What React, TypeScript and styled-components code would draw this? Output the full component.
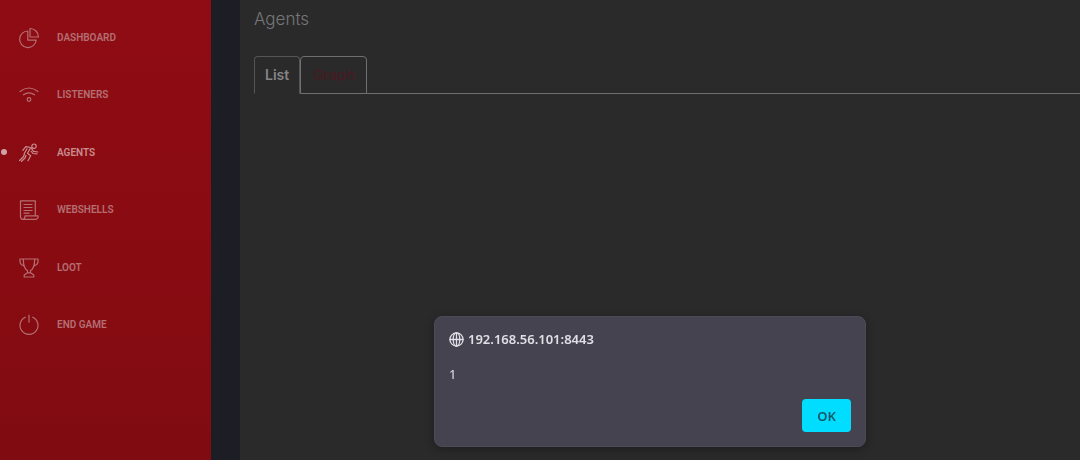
import React from 'react';
import styled, { createGlobalStyle } from 'styled-components';

const GlobalStyle = createGlobalStyle`
  *, *::before, *::after { box-sizing: border-box; }
  html, body, #root { height: 100%; }
  body { margin: 0; background: #2a2a2b; font-family: Inter, "Liberation Sans", sans-serif; overflow: hidden; }
`;

const Shell = styled.div`
  display: flex;
  min-height: 100%;
  background: #1d1d26;
`;

const Sidebar = styled.nav`
  flex: 0 0 211px;
  margin-right: 29px;
  padding-top: 9px;
  background: linear-gradient(180deg, #8f0c14 0%, #8a0b12 50%, #7f0c11 100%);
`;

const Menu = styled.ul`
  display: grid;
  grid-auto-rows: 1fr;
  height: 345px;
  list-style: none;
  margin: 0;
  padding: 0;
`;

const MenuLink = styled.a<{ $active?: boolean }>`
  position: relative;
  display: flex;
  align-items: center;
  gap: 17px;
  height: 100%;
  padding-left: 18px;
  color: ${(p) => (p.$active ? '#c98d8f' : '#b46f72')};
  font: 600 10px/16px Roboto, sans-serif;
  text-decoration: none;
  text-transform: uppercase;

  &::before {
    content: ${(p) => (p.$active ? '""' : 'none')};
    position: absolute;
    left: 1px;
    top: 25px;
    width: 6px;
    height: 6px;
    border-radius: 50%;
    background: #cfa3a3;
  }
`;

const Icon = styled.svg`
  width: 22px;
  height: 22px;
  fill: none;
  stroke: currentColor;
  stroke-width: 1.2;
  stroke-linecap: round;
  stroke-linejoin: round;
`;

const Main = styled.main`
  flex: 1;
  min-width: 0;
  padding: 7px 0 0 14px;
  background: #2a2a2b;
`;

const Title = styled.h1`
  margin: 0 0 25px;
  color: #77777a;
  font-size: 17px;
  line-height: 24px;
  font-weight: 300;
`;

const Tabs = styled.div`
  display: flex;
  align-items: stretch;
  height: 38px;

  &::after {
    content: "";
    flex: 1;
    border-bottom: 1px solid #707072;
  }
`;

const Tab = styled.button<{ $selected?: boolean }>`
  padding: 0 ${(p) => (p.$selected ? 10 : 12)}px;
  border: 1px solid ${(p) => (p.$selected ? '#555557' : '#707072')};
  border-bottom-color: ${(p) => (p.$selected ? 'transparent' : '#707072')};
  border-radius: 4px 4px 0 0;
  background: transparent;
  color: ${(p) => (p.$selected ? '#858587' : '#431d22')};
  font: 600 14px/20px Inter, sans-serif;
`;

const Dialog = styled.section`
  position: fixed;
  left: calc(50% + 110px);
  bottom: 13px;
  transform: translateX(-50%);
  display: flex;
  flex-direction: column;
  gap: 15px;
  width: 40%;
  min-width: 300px;
  padding: 12px 14px 14px;
  border: 1px solid #4d4b57;
  border-radius: 8px;
  background: #454350;
  box-shadow: 0 2px 10px rgba(0, 0, 0, 0.3);
  color: #e0dfe5;
  font: 400 13px/20px "Noto Sans", sans-serif;
`;

const Origin = styled.h2`
  display: flex;
  align-items: center;
  gap: 4px;
  margin: 0;
  font-size: 13px;
  line-height: 20px;
  font-weight: 600;
`;

const Globe = styled(Icon)`
  width: 15px;
  height: 15px;
  stroke-width: 1.4;
`;

const Message = styled.p`
  margin: 0;
`;

const OkButton = styled.button`
  align-self: flex-end;
  width: 49px;
  height: 33px;
  padding: 0;
  border: 0;
  border-radius: 4px;
  background: #00ddff;
  color: #155766;
  font: 600 13px/20px "Noto Sans", sans-serif;
`;

const items: { label: string; active?: boolean; icon: React.ReactNode }[] = [
  {
    label: 'Dashboard',
    icon: (
      <>
        <path d="M9.800 4a8.300 8.300 0 1 0 8.400 9.200H9.800z" />
        <path d="M12 1.500a8.500 8.500 0 0 1 8.500 8.500H12z" />
      </>
    ),
  },
  {
    label: 'Listeners',
    icon: (
      <>
        <path d="M2 7.500q9-7 18 0M5.500 10.800q5.500-4 11 0" />
        <circle cx="11" cy="15.500" r="1.800" />
      </>
    ),
  },
  {
    label: 'Agents',
    active: true,
    icon: (
      <>
        <circle cx="16" cy="4.200" r="2.200" />
        <path d="M4.800 8.300 7.800 4.600l5 .9 2.700 3.800 4.300.7" />
        <path d="M12.200 6.500 9.500 11.300l3.200 2.400-2.700 5" />
        <path d="M9 6.800 6.600 11l-1 3.500-4 4" />
        <path d="M8 13.300 7 16l-3.500 3.300M13.300 9.300l1.700 2.200 4 .3" />
      </>
    ),
  },
  {
    label: 'Webshells',
    icon: (
      <path d="M5 20.300c-2 0-2.500-1-2.500-2.500V1.800h14.800v14.700M5 20.300h12.500c1.800 0 2.700-1.500 2.700-3.500H7c0 2-.500 3.500-2 3.500zM6 5.500h8M6 8.500h8M6 11.500h8M6 14.200h5" />
    ),
  },
  {
    label: 'Loot',
    icon: (
      <path d="M5.300 2h11.400c0 6-1.200 10.200-4.200 11.500v2.300h-3v-2.300C6.500 12.200 5.300 8 5.300 2zM5.300 2H2v2.500c0 2 1.500 3.500 4 4.500M16.700 2H20v2.500c0 2-1.500 3.500-4 4.500M9.500 15.800 6.200 18v2h9.600v-2l-3.300-2.200" />
    ),
  },
  {
    label: 'End game',
    icon: <path d="M11 1.200v7M7.300 3.200a9 9 0 1 0 7.400 0" />,
  },
];

export default function App() {
  return (
    <>
      <GlobalStyle />
      <Shell>
        <Sidebar aria-label="Main">
          <Menu>
            {items.map((item) => (
              <li key={item.label}>
                <MenuLink href="#" $active={item.active}>
                  <Icon viewBox="0 0 22 22" aria-hidden="true">{item.icon}</Icon>
                  {item.label}
                </MenuLink>
              </li>
            ))}
          </Menu>
        </Sidebar>
        <Main>
          <Title>Agents</Title>
          <Tabs role="tablist">
            <Tab role="tab" aria-selected="true" $selected>List</Tab>
            <Tab role="tab" aria-selected="false">Graph</Tab>
          </Tabs>
        </Main>
      </Shell>
      <Dialog role="alertdialog" aria-labelledby="origin" aria-describedby="message">
        <Origin id="origin">
          <Globe viewBox="0 0 16 16" aria-hidden="true">
            <circle cx="8" cy="8" r="7" />
            <ellipse cx="8" cy="8" rx="3.500" ry="7" />
            <path d="M1 8h14M8 1v14" />
          </Globe>
          192.168.56.101:8443
        </Origin>
        <Message id="message">1</Message>
        <OkButton>OK</OkButton>
      </Dialog>
    </>
  );
}
